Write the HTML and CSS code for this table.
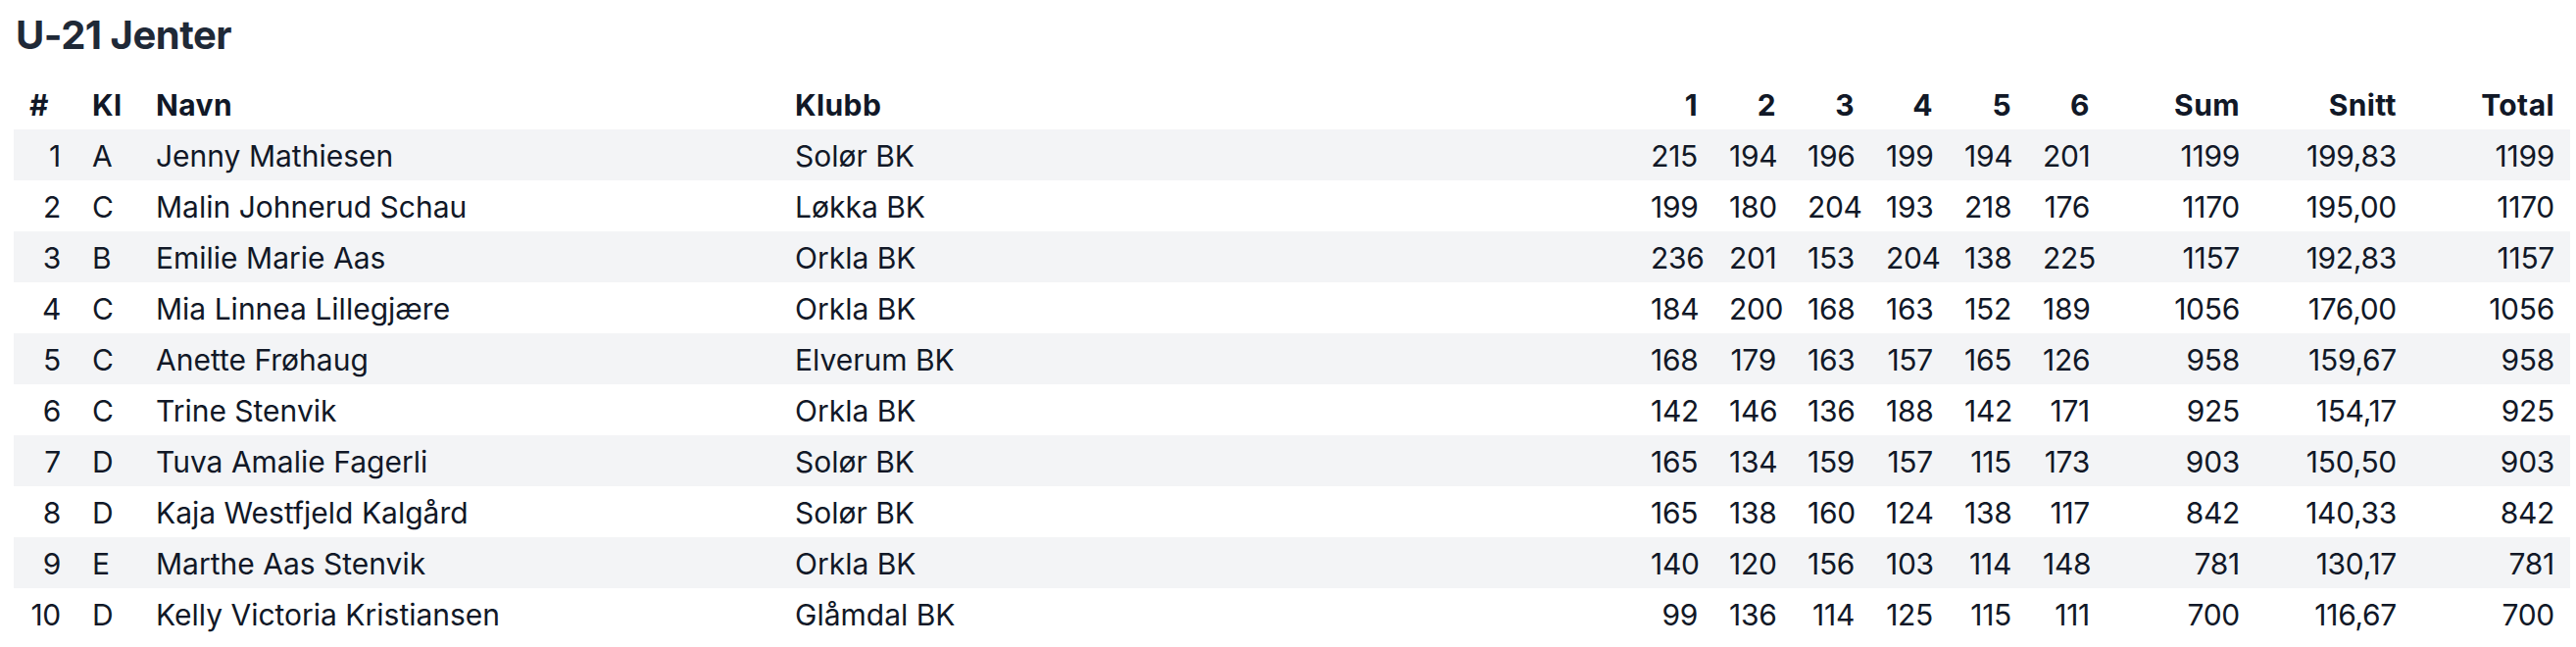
FILE: index.html
```html
<!DOCTYPE html>
<html lang="no">
<head>
    <meta charset="UTF-8">
    <meta name="viewport" content="width=device-width, initial-scale=1.0">
    <title>U-21 Jenter</title>
    <link rel="stylesheet" href="styles.css">
</head>
<body>

    <section class="klasse">
        <h2 class="klasse-tittel">U-21 Jenter</h2>

        <table class="resultat">
            <colgroup>
                <col class="col-plass">
                <col class="col-kl">
                <col class="col-navn">
                <col class="col-klubb">
                <col class="col-serie">
                <col class="col-serie">
                <col class="col-serie">
                <col class="col-serie">
                <col class="col-serie">
                <col class="col-serie">
                <col class="col-sum">
                <col class="col-snitt">
                <col class="col-total">
            </colgroup>
            <thead>
                <tr>
                    <th>#</th>
                    <th>Kl</th>
                    <th>Navn</th>
                    <th>Klubb</th>
                    <th class="tall">1</th>
                    <th class="tall">2</th>
                    <th class="tall">3</th>
                    <th class="tall">4</th>
                    <th class="tall">5</th>
                    <th class="tall">6</th>
                    <th class="tall">Sum</th>
                    <th class="tall">Snitt</th>
                    <th class="tall">Total</th>
                </tr>
            </thead>
            <tbody>
                <tr><td class="tall">1</td><td>A</td><td>Jenny Mathiesen</td><td>Solør BK</td><td class="tall">215</td><td class="tall">194</td><td class="tall">196</td><td class="tall">199</td><td class="tall">194</td><td class="tall">201</td><td class="tall">1199</td><td class="tall">199,83</td><td class="tall">1199</td></tr>
                <tr><td class="tall">2</td><td>C</td><td>Malin Johnerud Schau</td><td>Løkka BK</td><td class="tall">199</td><td class="tall">180</td><td class="tall">204</td><td class="tall">193</td><td class="tall">218</td><td class="tall">176</td><td class="tall">1170</td><td class="tall">195,00</td><td class="tall">1170</td></tr>
                <tr><td class="tall">3</td><td>B</td><td>Emilie Marie Aas</td><td>Orkla BK</td><td class="tall">236</td><td class="tall">201</td><td class="tall">153</td><td class="tall">204</td><td class="tall">138</td><td class="tall">225</td><td class="tall">1157</td><td class="tall">192,83</td><td class="tall">1157</td></tr>
                <tr><td class="tall">4</td><td>C</td><td>Mia Linnea Lillegjære</td><td>Orkla BK</td><td class="tall">184</td><td class="tall">200</td><td class="tall">168</td><td class="tall">163</td><td class="tall">152</td><td class="tall">189</td><td class="tall">1056</td><td class="tall">176,00</td><td class="tall">1056</td></tr>
                <tr><td class="tall">5</td><td>C</td><td>Anette Frøhaug</td><td>Elverum BK</td><td class="tall">168</td><td class="tall">179</td><td class="tall">163</td><td class="tall">157</td><td class="tall">165</td><td class="tall">126</td><td class="tall">958</td><td class="tall">159,67</td><td class="tall">958</td></tr>
                <tr><td class="tall">6</td><td>C</td><td>Trine Stenvik</td><td>Orkla BK</td><td class="tall">142</td><td class="tall">146</td><td class="tall">136</td><td class="tall">188</td><td class="tall">142</td><td class="tall">171</td><td class="tall">925</td><td class="tall">154,17</td><td class="tall">925</td></tr>
                <tr><td class="tall">7</td><td>D</td><td>Tuva Amalie Fagerli</td><td>Solør BK</td><td class="tall">165</td><td class="tall">134</td><td class="tall">159</td><td class="tall">157</td><td class="tall">115</td><td class="tall">173</td><td class="tall">903</td><td class="tall">150,50</td><td class="tall">903</td></tr>
                <tr><td class="tall">8</td><td>D</td><td>Kaja Westfjeld Kalgård</td><td>Solør BK</td><td class="tall">165</td><td class="tall">138</td><td class="tall">160</td><td class="tall">124</td><td class="tall">138</td><td class="tall">117</td><td class="tall">842</td><td class="tall">140,33</td><td class="tall">842</td></tr>
                <tr><td class="tall">9</td><td>E</td><td>Marthe Aas Stenvik</td><td>Orkla BK</td><td class="tall">140</td><td class="tall">120</td><td class="tall">156</td><td class="tall">103</td><td class="tall">114</td><td class="tall">148</td><td class="tall">781</td><td class="tall">130,17</td><td class="tall">781</td></tr>
                <tr><td class="tall">10</td><td>D</td><td>Kelly Victoria Kristiansen</td><td>Glåmdal BK</td><td class="tall">99</td><td class="tall">136</td><td class="tall">114</td><td class="tall">125</td><td class="tall">115</td><td class="tall">111</td><td class="tall">700</td><td class="tall">116,67</td><td class="tall">700</td></tr>
            </tbody>
        </table>
    </section>

</body>
</html>
```

FILE: styles.css
```css
body {
    margin: 0;
    background: #fff;
    color: #111827;
    font-family: Inter, "Noto Sans", sans-serif;
}

.klasse {
    padding: 0 6px 0 14px;
}

.klasse-tittel {
    margin: 12px 0 20px 2px;
    font-size: 40px;
    line-height: 48px;
    font-weight: 700;
    color: #1f2937;
    letter-spacing: -0.5px;
}

.resultat {
    width: 100%;
    table-layout: fixed;
    border-collapse: collapse;
    font-size: 30px;
}

.col-plass { width: 64px; }
.col-kl { width: 65px; }
.col-navn { width: 652px; }
.col-klubb { width: 873px; }
.col-serie { width: 80px; }
.col-sum { width: 153px; }
.col-snitt { width: 160px; }
.col-total { width: 161px; }

.resultat th,
.resultat td {
    padding: 3px 16px 0;
    line-height: 49px;
    text-align: left;
    white-space: nowrap;
    overflow: visible;
}

.resultat th {
    font-weight: 700;
    letter-spacing: 0.4px;
}

.resultat .tall {
    text-align: right;
}

.resultat tbody .tall {
    letter-spacing: -0.3px;
}

.resultat tbody tr:nth-child(odd) {
    background: #f3f4f6;
}
```
